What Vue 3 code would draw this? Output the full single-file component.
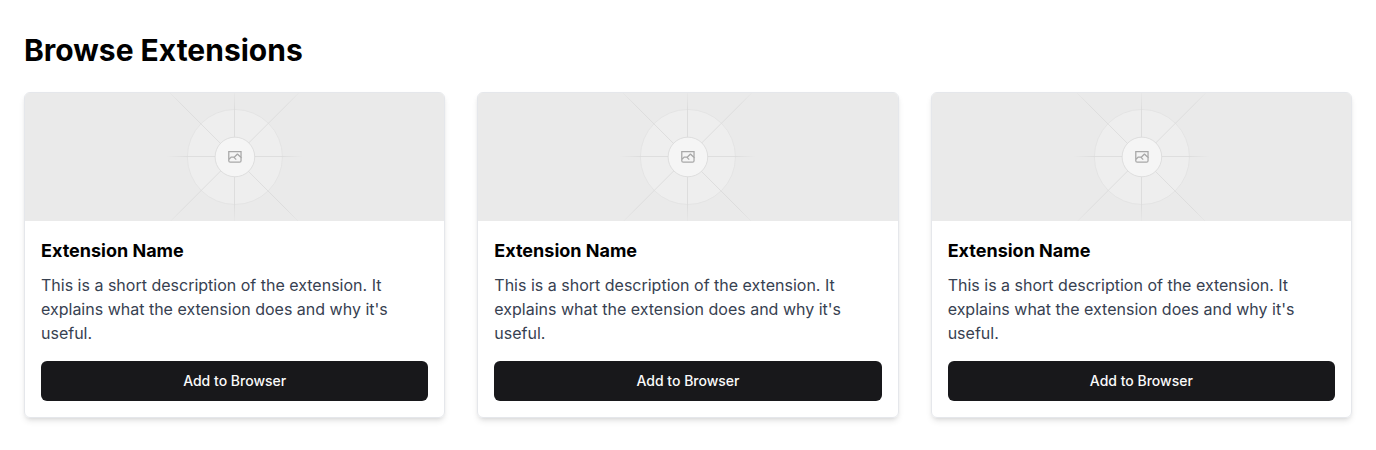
<script setup>
const extensions = [1, 2, 3].map((id) => ({
  id,
  name: 'Extension Name',
  description: "This is a short description of the extension. It explains what the extension does and why it's useful.",
}))
</script>

<template>
  <main class="page">
    <h1>Browse Extensions</h1>
    <div class="grid">
      <article v-for="ext in extensions" :key="ext.id" class="card">
        <svg class="cover" viewBox="0 0 1200 1200" preserveAspectRatio="xMidYMid slice" fill="none" aria-hidden="true">
          <defs>
            <radialGradient :id="'fade' + ext.id" gradientUnits="userSpaceOnUse" cx="600" cy="600" r="277">
              <stop offset="0.75" stop-color="#c9c9c9" />
              <stop offset="1" stop-color="#c9c9c9" stop-opacity="0" />
            </radialGradient>
            <radialGradient :id="'short' + ext.id" gradientUnits="userSpaceOnUse" cx="600" cy="600" r="196">
              <stop offset="0.7" stop-color="#c9c9c9" />
              <stop offset="1" stop-color="#c9c9c9" stop-opacity="0" />
            </radialGradient>
          </defs>
          <rect width="1200" height="1200" fill="#eaeaea" />
          <g opacity="0.5">
            <g opacity="0.5">
              <circle cx="600.7" cy="599.9" r="136" fill="#fafafa" stroke="#c9c9c9" stroke-width="2.4" />
            </g>
            <g stroke-width="2.4">
              <path :stroke="`url(#short${ext.id})`" d="M404.8 598.7h391.8M599.5 795.7V404" />
              <path :stroke="`url(#fade${ext.id})`" d="M795.7 797.4 404.3 405.9M404.3 795.7 795.7 404.3" />
            </g>
            <circle cx="600.7" cy="599.9" r="56.7" fill="#fff" stroke="#c9c9c9" stroke-width="2.4" />
            <path
              fill="#666"
              fill-rule="evenodd"
              d="M616.426 586.58h-31.434v16.176l3.553-3.554.531-.531h9.068l.074-.074 8.463-8.463h2.565l7.18 7.181V586.58Zm-15.715 14.654 3.698 3.699 1.283 1.282-2.565 2.565-1.282-1.283-5.2-5.199h-6.066l-5.514 5.514-.073.073v2.876a2.418 2.418 0 0 0 2.418 2.418h26.598a2.418 2.418 0 0 0 2.418-2.418v-8.317l-8.463-8.463-7.181 7.181-.071.072Zm-19.347 5.442v4.085a6.045 6.045 0 0 0 6.046 6.045h26.598a6.044 6.044 0 0 0 6.045-6.045v-7.108l1.356-1.355-1.282-1.283-.074-.073v-17.989h-38.689v23.43l-.146.146.146.147Z"
            />
          </g>
        </svg>
        <div class="body">
          <h2>{{ ext.name }}</h2>
          <p>{{ ext.description }}</p>
          <button type="button">Add to Browser</button>
        </div>
      </article>
    </div>
  </main>
</template>

<style>
body {
  margin: 0;
  background: #fff;
}
</style>

<style scoped>
.page {
  padding: 32px 24px;
  font-family: Inter, "Liberation Sans", sans-serif;
  font-size: 16px;
  line-height: 24px;
  color: #000;
}

h1 {
  margin: 0 0 24px;
  font-size: 30px;
  line-height: 36px;
  font-weight: 700;
}

.grid {
  display: grid;
  grid-template-columns: repeat(3, minmax(0, 1fr));
  gap: 32px;
}

.card {
  overflow: hidden;
  border: 1px solid #e5e7eb;
  border-radius: 6px;
  box-shadow: 0 4px 6px -1px rgb(0 0 0 / 0.1), 0 2px 4px -2px rgb(0 0 0 / 0.1);
}

.cover {
  display: block;
  width: 100%;
  height: 128px;
  background: #eaeaea;
}

.body {
  padding: 16px;
}

h2 {
  margin: 0 0 8px;
  font-size: 18px;
  line-height: 28px;
  font-weight: 700;
}

p {
  margin: 0 0 16px;
  color: #374151;
}

button {
  display: block;
  width: 100%;
  height: 40px;
  padding: 0 16px;
  border: 0;
  border-radius: 6px;
  background: #18181b;
  color: #fafafa;
  font: 500 14px/20px Inter, "Liberation Sans", sans-serif;
  cursor: pointer;
}
</style>
